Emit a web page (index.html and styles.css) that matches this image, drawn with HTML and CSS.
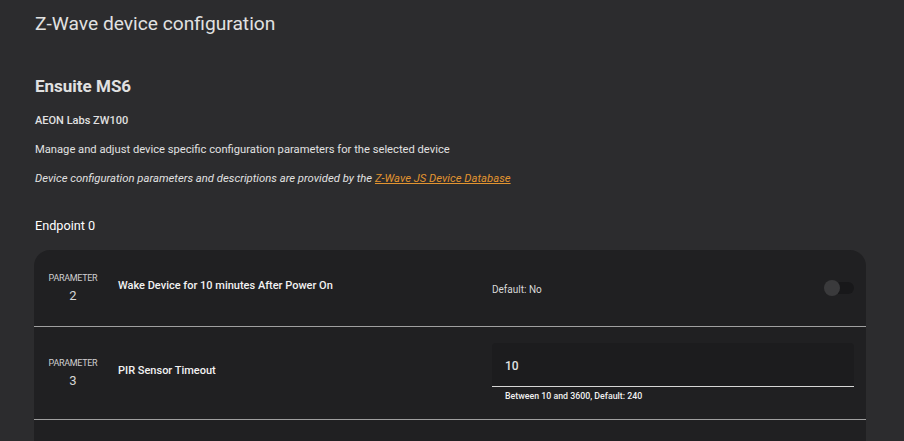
FILE: index.html
```html
<!DOCTYPE html>
<html lang="en">
<head>
    <meta charset="UTF-8">
    <meta name="viewport" content="width=device-width, initial-scale=1.0">
    <title>Z-Wave device configuration</title>
    <link rel="stylesheet" href="styles.css">
</head>
<body>
    <div class="page">
        <h1 class="page-title">Z-Wave device configuration</h1>

        <!-- Device info -->
        <section class="device">
            <h2 class="device-name">Ensuite MS6</h2>
            <p class="device-model">AEON Labs ZW100</p>
            <p class="device-text">Manage and adjust device specific configuration parameters for the selected device</p>
            <p class="device-text note">Device configuration parameters and descriptions are provided by the <a href="#">Z-Wave JS Device Database</a></p>
        </section>

        <h3 class="endpoint">Endpoint 0</h3>

        <!-- Parameter list -->
        <div class="card">
            <div class="param-row">
                <div class="param-id">
                    <span class="param-label">PARAMETER</span>
                    <span class="param-num">2</span>
                </div>
                <div class="param-title">Wake Device for 10 minutes After Power On</div>
                <div class="param-value">
                    <span class="default-text">Default: No</span>
                    <span class="switch"><span class="switch-thumb"></span></span>
                </div>
            </div>
            <div class="param-row tall">
                <div class="param-id">
                    <span class="param-label">PARAMETER</span>
                    <span class="param-num">3</span>
                </div>
                <div class="param-title">PIR Sensor Timeout</div>
                <div class="param-value field">
                    <div class="text-field">10</div>
                    <div class="helper">Between 10 and 3600, Default: 240</div>
                </div>
            </div>
            <div class="param-row"></div>
        </div>
    </div>
</body>
</html>
```

FILE: styles.css
```css
body {
    margin: 0;
    background: #2c2c2e;
    color: #e1e1e1;
    font-family: Roboto, "Noto Sans", sans-serif;
    overflow: hidden;
}

.page {
    padding: 0 38px 0 34px;
}

.page-title {
    margin: 12px 0 0 1px;
    font-size: 19.2px;
    line-height: 24px;
    font-weight: 400;
    color: #e1e1e1;
}

.device-name {
    margin: 40px 0 0 1px;
    font-size: 17px;
    line-height: 20px;
    font-weight: 700;
}

.device-model {
    margin: 18px 0 0 1px;
    font-size: 11px;
    line-height: 14px;
    font-weight: 500;
}

.device-text {
    margin: 15px 0 0 1px;
    font-size: 11.2px;
    line-height: 14px;
}

.note {
    font-style: italic;
    font-size: 11.3px;
}

.note a {
    color: #e29430;
}

.endpoint {
    margin: 32px 0 0 1px;
    font-size: 12.7px;
    line-height: 16px;
    font-weight: 400;
    color: #fff;
}

.card {
    margin-top: 16px;
    background: #202022;
    border-radius: 16px 16px 0 0;
    height: 200px;
}

.param-row {
    display: flex;
    align-items: center;
    height: 76px;
    padding-right: 12px;
    border-bottom: 1px solid #a0a0a0;
}

.param-row.tall {
    height: 92px;
}

.param-id {
    width: 78px;
    display: flex;
    flex-direction: column;
    align-items: center;
}

.param-label {
    font-size: 9px;
    line-height: 11px;
    color: #d0d0d0;
    letter-spacing: -0.3px;
}

.param-num {
    margin-top: 4px;
    font-size: 13px;
    line-height: 15px;
    color: #d6d6d6;
}

.param-title {
    margin: 0 0 6px 6px;
    width: 374px;
    font-size: 11px;
    font-weight: 500;
    color: #f2f2f2;
}

.param-value {
    flex: 1;
    display: flex;
    align-items: center;
    justify-content: space-between;
}

.default-text {
    margin-top: 3px;
    font-size: 10px;
    color: #d8d8d8;
}

.switch {
    position: relative;
    width: 22px;
    height: 12px;
    border-radius: 6px;
    background: #18181a;
}

.switch-thumb {
    position: absolute;
    left: -8px;
    top: -2px;
    width: 16px;
    height: 16px;
    border-radius: 50%;
    background: #3a3a3c;
}

.field {
    flex-direction: column;
    align-items: stretch;
    justify-content: flex-start;
    align-self: flex-start;
    margin-top: 16px;
}

.text-field {
    height: 44px;
    box-sizing: border-box;
    padding: 16px 13px 0;
    background: #1c1c1e;
    border-bottom: 1px solid #d6d6d6;
    border-radius: 4px 4px 0 0;
    font-size: 12px;
    line-height: 14px;
    font-weight: 500;
}

.helper {
    padding: 3px 13px 0;
    font-size: 8.8px;
    line-height: 12px;
    font-weight: 500;
    color: #f0f0f0;
}
```
